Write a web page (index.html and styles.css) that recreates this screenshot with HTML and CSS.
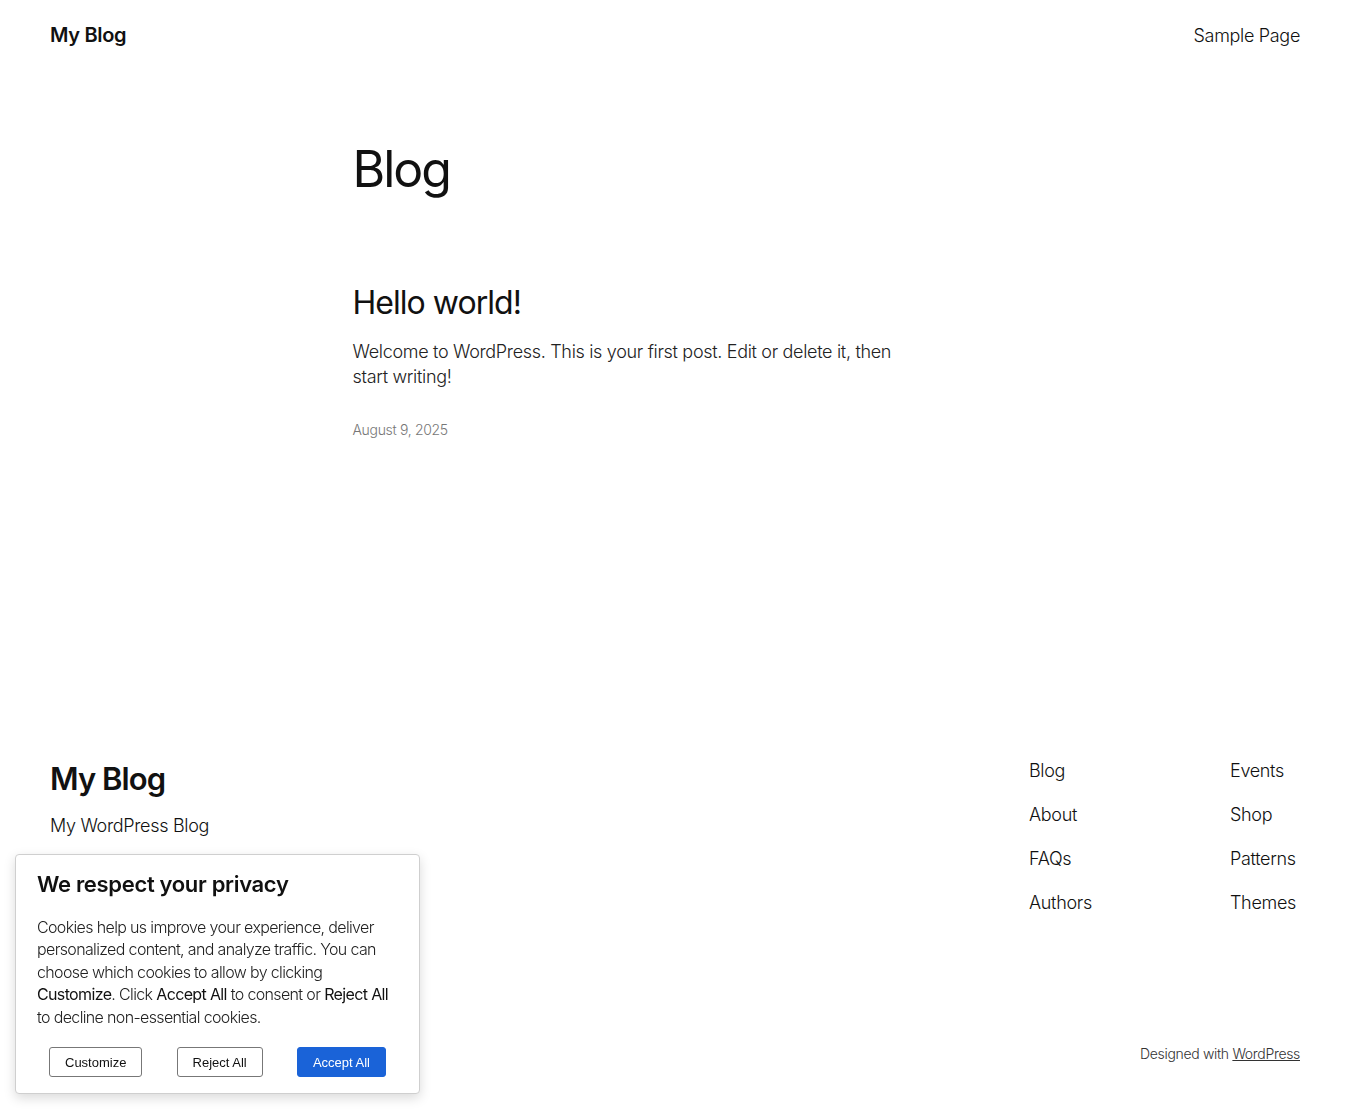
FILE: index.html
```html
<!DOCTYPE html>
<html lang="en">
<head>
<meta charset="UTF-8">
<meta name="viewport" content="width=device-width, initial-scale=1.0">
<title>Blog – My Blog</title>
<link rel="stylesheet" href="styles.css">
</head>
<body>
<div class="site">
  <header class="site-header">
    <a class="site-title" href="#">My Blog</a>
    <nav class="site-nav">
      <a href="#">Sample Page</a>
    </nav>
  </header>

  <main class="site-main">
    <h1 class="page-title">Blog</h1>

    <article class="post">
      <h2 class="post-title"><a href="#">Hello world!</a></h2>
      <p class="post-excerpt">Welcome to WordPress. This is your first post. Edit or delete it, then start writing!</p>
      <div class="post-date">August 9, 2025</div>
    </article>
  </main>

  <footer class="site-footer">
    <div class="footer-top">
      <div class="footer-brand">
        <div class="footer-title">My Blog</div>
        <div class="footer-tagline">My WordPress Blog</div>
      </div>
      <div class="footer-links">
        <ul class="footer-col">
          <li><a href="#">Blog</a></li>
          <li><a href="#">About</a></li>
          <li><a href="#">FAQs</a></li>
          <li><a href="#">Authors</a></li>
        </ul>
        <ul class="footer-col">
          <li><a href="#">Events</a></li>
          <li><a href="#">Shop</a></li>
          <li><a href="#">Patterns</a></li>
          <li><a href="#">Themes</a></li>
        </ul>
      </div>
    </div>
    <div class="footer-bottom">
      Designed with <a href="#">WordPress</a>
    </div>
  </footer>
</div>

<div class="cookie-banner">
  <div class="cookie-title">We respect your privacy</div>
  <p class="cookie-text">Cookies help us improve your experience, deliver personalized content, and analyze traffic. You can choose which cookies to allow by clicking <b>Customize</b>. Click <b>Accept All</b> to consent or <b>Reject All</b> to decline non-essential cookies.</p>
  <div class="cookie-buttons">
    <button class="cookie-btn">Customize</button>
    <button class="cookie-btn">Reject All</button>
    <button class="cookie-btn accept">Accept All</button>
  </div>
</div>
</body>
</html>
```

FILE: styles.css
```css
body {
  margin: 0;
  font-family: Inter, "Noto Sans", sans-serif;
  font-weight: 300;
  color: #111;
  background-color: #fff;
  letter-spacing: -0.02em;
}

a {
  color: inherit;
  text-decoration: none;
}

.site {
  display: flex;
  flex-direction: column;
  min-height: 1114px;
}

/* header */
.site-header {
  display: flex;
  justify-content: space-between;
  align-items: center;
  padding: 22px 50px;
  height: 26px;
}

.site-title {
  font-size: 20px;
  font-weight: 600;
}

.site-nav a {
  font-size: 18px;
  font-weight: 300;
}

/* main */
.site-main {
  width: 645px;
  margin: 0 auto;
  flex: 1;
}

.page-title {
  font-size: 50px;
  font-weight: 400;
  letter-spacing: -0.04em;
  margin: 69px 0 0;
  line-height: 1.2;
}

.post {
  margin-top: 85px;
}

.post-title {
  font-size: 32px;
  font-weight: 400;
  letter-spacing: -0.03em;
  margin: 0;
  line-height: 1.2;
}

.post-excerpt {
  font-size: 18px;
  line-height: 25px;
  max-width: 570px;
  margin: 17px 0 0;
  color: #222;
}

.post-date {
  font-size: 14px;
  color: #777;
  margin-top: 32px;
}

/* footer */
.site-footer {
  padding: 0 50px 52px;
}

.footer-top {
  display: flex;
  justify-content: space-between;
}

.footer-title {
  font-size: 31px;
  font-weight: 600;
  letter-spacing: -0.03em;
  line-height: 42px;
}

.footer-tagline {
  font-size: 18px;
  margin-top: 15px;
}

.footer-links {
  display: flex;
  gap: 101px;
}

.footer-col {
  list-style: none;
  margin: 0;
  padding: 0;
  width: 100px;
  display: flex;
  flex-direction: column;
  gap: 18px;
}

.footer-col:last-child {
  width: 70px;
}

.footer-col li {
  font-size: 18px;
  line-height: 26px;
}

.footer-bottom {
  text-align: right;
  font-size: 14px;
  margin-top: 129px;
  color: #333;
}

.footer-bottom a {
  text-decoration: underline;
}

/* cookie banner */
.cookie-banner {
  position: fixed;
  left: 15px;
  bottom: 20px;
  width: 363px;
  padding: 16px 20px 16px;
  background-color: #fff;
  border: 1px solid #cfcfcf;
  border-radius: 4px;
  box-shadow: 0 4px 12px rgba(0, 0, 0, 0.15);
}

.cookie-title {
  font-size: 22px;
  font-weight: 600;
  color: #111;
  margin-left: 1px;
}

.cookie-text {
  font-size: 16px;
  line-height: 22.5px;
  margin: 19px 0 0 1px;
  color: #222;
  letter-spacing: -0.04em;
}

.cookie-text b {
  font-weight: 400;
  color: #111;
}

.cookie-buttons {
  display: flex;
  justify-content: space-between;
  padding: 0 13px;
  margin-top: 19px;
}

.cookie-btn {
  font-family: "Liberation Sans", Arial, sans-serif;
  font-size: 13px;
  letter-spacing: 0;
  height: 30px;
  padding: 0 15px;
  background-color: #fff;
  color: #111;
  border: 1px solid #777;
  border-radius: 3px;
  cursor: pointer;
}

.cookie-btn.accept {
  background-color: #1a63d8;
  border-color: #1a63d8;
  color: #fff;
}
```
